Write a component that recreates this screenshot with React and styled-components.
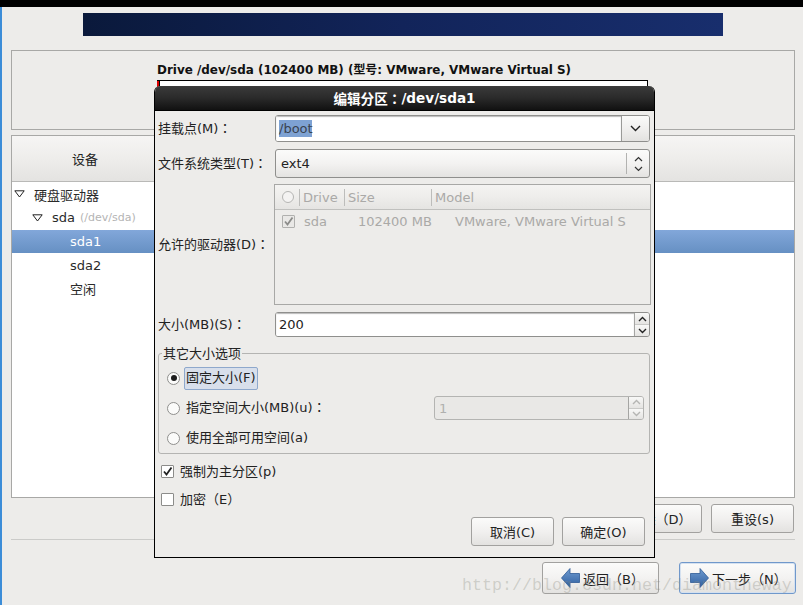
import React from "react";
import styled, { createGlobalStyle, css } from "styled-components";

const Global = createGlobalStyle`
  html, body { margin: 0; padding: 0; background: #edecea; }
  body { width: 803px; height: 605px; overflow: hidden; font-family: "DejaVu Sans", "Noto Sans CJK SC", sans-serif; font-size: 13px; color: #222; }
  * { box-sizing: border-box; }
`;

const Screen = styled.div`
  position: relative; width: 803px; height: 605px; display: flex; flex-direction: column; overflow: hidden; background: #edecea;
`;
const TopBar = styled.div`height: 7px; background: #000; flex: none;`;
const Desk = styled.div`flex: 1; display: flex; min-height: 0;`;
const Strip = styled.div`width: 2px; background: #3c8dd8; flex: none;`;
const Main = styled.div`flex: 1; display: flex; flex-direction: column; padding: 6px 8px 0 9px; min-width: 0;`;
const Banner = styled.div`
  align-self: center; width: 640px; height: 23px; flex: none;
  background: linear-gradient(90deg, #0a193b 0%, #12245a 50%, #182e6d 100%);
`;
const DrivePanel = styled.section`
  margin-top: 14px; height: 80px; flex: none; border: 1px solid #a8a8a6;
  display: flex; flex-direction: column; align-items: center; padding-top: 11px;
`;
const DriveTitle = styled.div`
  width: 491px; margin-right: 1px; font-size: 11.95px; font-weight: 700; color: #111; line-height: 16px; white-space: nowrap;
`;
const DriveBar = styled.div`
  width: 491px; height: 42px; margin-top: 2px; margin-right: 1px; border: 1px solid #000; background: #fff; border-left: 0; display: flex;
`;
const DriveSeg = styled.div`width: 3px; background: #e00000; border-right: 1px solid #000;`;
const DevicePanel = styled.section`
  margin-top: 5px; height: 363px; flex: none; border: 1px solid #a8a8a6; background: #fff; display: flex; flex-direction: column;
`;
const DeviceHead = styled.div`
  height: 46px; flex: none; background: linear-gradient(180deg, #f6f5f4 0%, #eeedeb 50%, #e4e3e1 100%);
  border-bottom: 1px solid #b9b9b7; display: flex; align-items: center;
`;
const HeadCell = styled.div`width: 146px; text-align: center; color: #222;`;
const Tree = styled.div`padding-top: 0.5px; display: flex; flex-direction: column;`;
const TreeRow = styled.div`
  height: 23.6px; flex: none; display: flex; align-items: center; padding-left: ${p => p.$indent}px;
  color: ${p => (p.$selected ? "#fff" : "#2a2a2a")};
  ${p => p.$selected && css`background: linear-gradient(180deg, #82a7da 0%, #6690c3 100%);`}
`;
const TreeIcon = styled.svg`width: 11px; height: 8px; margin-right: ${p => p.$gap}px; flex: none;`;
const TreeHint = styled.span`margin-left: 5px; font-size: 11px; color: #b4b4b4;`;
const ActionRow = styled.div`margin-top: 6px; display: flex; justify-content: flex-end; gap: 9px; padding-right: 1px; flex: none;`;
const Button = styled.div`
  width: ${p => p.$w || 83}px; height: 29px; border: 1px solid #a2a19f; border-radius: 3px;
  background: linear-gradient(180deg, #fbfbfa 0%, #f1f0ef 50%, #e3e2e0 100%);
  display: flex; align-items: center; justify-content: center; color: #222; white-space: nowrap;
`;
const Separator = styled.div`margin-top: 6px; height: 1px; background: #cbcbc9; flex: none;`;
const NavRow = styled.div`margin-top: 22px; margin-right: -1px; display: flex; justify-content: flex-end; gap: 20px; flex: none;`;
const NavButton = styled.div`
  width: 117px; height: 32px; border-radius: 3px; border: 1px solid ${p => (p.$primary ? "#7098cb" : "#a2a19f")};
  background: linear-gradient(180deg, #fbfbfa 0%, #f3f2f1 50%, #e3e2e0 100%);
  display: flex; align-items: center; justify-content: flex-start; gap: 3px; padding-left: ${p => (p.$primary ? 10 : 18)}px;
  color: #222; white-space: nowrap;
  ${p => p.$primary && css`box-shadow: inset 0 0 0 1px #d5e1f0;`}
`;
const Watermark = styled.div`
  position: absolute; left: 462px; top: 576px; font-family: "Liberation Mono", "DejaVu Sans Mono", monospace; font-size: 16.67px;
  line-height: 20px; color: rgba(140, 140, 130, 0.32); white-space: nowrap; pointer-events: none;
`;

const Dialog = styled.div`
  position: absolute; left: 154px; top: 86px; width: 501px; height: 472px; background: #edecea;
  border: 1px solid #000; border-top: 0; border-radius: 6px 6px 0 0; display: flex; flex-direction: column; overflow: hidden;
`;
const DialogHead = styled.div`
  height: 25px; flex: none; background: linear-gradient(180deg, #3b3b3b 0%, #2a2a2a 50%, #111 100%); border-bottom: 1px solid #000;
  color: #fff; font-weight: 700; font-size: 13.6px; display: flex; align-items: center; justify-content: center; margin: 0 -1px;
`;
const DialogBody = styled.div`flex: 1; display: flex; flex-direction: column; padding: 4px 4px 0 3px; min-height: 0;`;
const FieldRow = styled.div`
  display: grid; grid-template-columns: 117px 1fr; align-items: center; margin-top: ${p => p.$top || 0}px; flex: none;
`;
const Label = styled.div`white-space: nowrap; color: #222; padding-bottom: 3px;`;
const Colon = styled.span`font-family: "Noto Sans CJK TC", sans-serif;`;
const fieldBox = css`
  height: ${p => p.$h}px; border: 1px solid #8f8f8d; border-radius: 3px; display: flex; overflow: hidden;
`;
const Combo = styled.div`${fieldBox} background: #fff;`;
const ComboInput = styled.div`
  flex: 1; display: flex; align-items: center; padding-left: 3px; background: #fff; box-shadow: inset 0 1px 1px #bbb;
  border-right: 1px solid #9a9a98; color: #222;
`;
const Selected = styled.span`background: #7ea2d3; color: #3a4250; line-height: 17px; width: 33px; display: inline-block;`;
const ComboButton = styled.div`
  width: 27px; flex: none; display: flex; align-items: center; justify-content: center;
  background: linear-gradient(180deg, #fafaf9 0%, #f0efee 50%, #e3e2e0 100%);
`;
const Select = styled.div`
  ${fieldBox} background: linear-gradient(180deg, #fbfbfa 0%, #f3f2f1 50%, #e4e3e1 100%); align-items: center; padding-left: 5px;
`;
const SelectText = styled.div`flex: 1; color: #222;`;
const SelectSep = styled.div`width: 1px; height: 21px; background: #b2b2b0;`;
const SelectArrows = styled.div`width: 22px; display: flex; align-items: center; justify-content: center;`;
const Table = styled.div`
  height: 121px; margin: 0 -1px; border: 1px solid #a8a8a6; display: flex; flex-direction: column; background: #edecea;
`;
const TableHead = styled.div`
  height: 25px; flex: none; display: grid; grid-template-columns: 25px 45px 87px 1fr; align-items: center; color: #aaa9a7;
  background: linear-gradient(180deg, #f4f3f2 0%, #eeedeb 50%, #e5e4e2 100%); border-bottom: 1px solid #c0c0be;
`;
const HeadCol = styled.div`
  height: 17px; line-height: 17px; display: flex; align-items: center; padding-left: 3px;
  ${p => p.$sep && css`border-right: 1px solid #bdbdbb;`}
`;
const Ring = styled.span`width: 12px; height: 12px; margin-left: 4px; border-radius: 50%; border: 1px solid #b5b5b3; background: #f4f3f2;`;
const TableRow = styled.div`
  display: grid; grid-template-columns: 29px 54px 97px 1fr; align-items: center; height: 23px; color: #aaa9a7; white-space: nowrap;
`;
const CheckBox = styled.span`
  width: 13px; height: 13px; flex: none; border: 1px solid ${p => (p.$off ? "#b0b0ae" : "#8c8c8a")}; border-radius: 1px;
  background: ${p => (p.$off ? "#e9e8e6" : "#fff")}; display: flex; align-items: center; justify-content: center;
  margin-left: ${p => p.$left || 0}px;
`;
const SpinButtons = styled.div`
  width: 15px; flex: none; display: flex; flex-direction: column; border-left: 1px solid #a5a5a3;
`;
const SpinPart = styled.div`
  flex: 1; display: flex; align-items: center; justify-content: center;
  background: linear-gradient(180deg, #f8f8f7, #e5e4e2);
  & + & { border-top: 1px solid ${p => (p.$off ? "#c9c9c7" : "#aaa")}; }
`;
const SizeInput = styled.div`${fieldBox}`;
const SizeValue = styled.div`flex: 1; background: #fff; display: flex; align-items: center; padding-left: 3px; box-shadow: inset 0 1px 1px #bbb;`;
const GroupBox = styled.div`
  position: relative; margin-top: 16px; height: 101px; flex: none; border: 1px solid #b4b4b2; border-radius: 3px;
  padding: 9px 5px 0 8px; display: flex; flex-direction: column;
`;
const Legend = styled.div`
  position: absolute; left: 3px; top: -9px; padding: 0 1px; background: #edecea; color: #222; line-height: 17px;
`;
const OptionRow = styled.div`height: 30px; flex: none; display: flex; align-items: center;`;
const Radio = styled.span`
  width: 13px; height: 13px; flex: none; border-radius: 50%; border: 1px solid #8f8f8d;
  background: #fbfbfa; display: flex; align-items: center; justify-content: center;
  &::after { content: ""; width: 6px; height: 6px; border-radius: 50%; background: ${p => (p.$on ? "#1c1c1c" : "transparent")}; }
`;
const OptionLabel = styled.span`
  margin-left: 4px; padding: 1px 1px 3px; line-height: 17px; color: #222; border: 1px solid transparent; border-radius: 2px; white-space: nowrap;
  ${p => p.$focus && css`background: #d8dfeb; border-color: #8ea8cc;`}
`;
const DisabledSpin = styled.div`
  margin-left: auto; width: 210px; height: 24px; border: 1px solid #b4b4b2; border-radius: 3px; display: flex; overflow: hidden; background: #e9e8e6;
`;
const DisabledValue = styled.div`flex: 1; padding-left: 4px; display: flex; align-items: center; color: #b0b0ae;`;
const CheckRow = styled.div`
  height: 28px; flex: none; display: flex; align-items: center; gap: 6px; padding-left: 3px; color: #222;
  margin-top: ${p => p.$top || 0}px;
`;
const CheckText = styled.span`padding-bottom: 2px;`;
const DialogActions = styled.div`margin-top: 4px; padding-right: 5px; display: flex; justify-content: flex-end; gap: 8px; flex: none;`;

const Tick = ({ color = "#222" }) => (
  <svg width="11" height="11" viewBox="0 0 11 11"><path d="M2 5.5 L4.5 8.5 L9.5 1.5" fill="none" stroke={color} strokeWidth="1.8" /></svg>
);
const Triangle = ({ gap }) => (
  <TreeIcon $gap={gap} viewBox="0 0 11 8"><path d="M0.8 0.8 H10.2 L5.5 7 Z" fill="#fff" stroke="#222" strokeWidth="1" /></TreeIcon>
);
const Chevron = () => (
  <svg width="11" height="7" viewBox="0 0 11 7"><path d="M1 1 L5.5 5.5 L10 1" fill="none" stroke="#222" strokeWidth="1.4" /></svg>
);
const UpDown = () => (
  <svg width="9" height="16" viewBox="0 0 9 16"><path d="M1 5 L4.5 1.5 L8 5 M1 11 L4.5 14.5 L8 11" fill="none" stroke="#333" strokeWidth="1.2" /></svg>
);
const Spin = ({ up, color = "#222" }) => (
  <svg width="9" height="6" viewBox="0 0 9 6"><path d={up ? "M1 5 L4.5 1.5 L8 5" : "M1 1 L4.5 4.5 L8 1"} fill="none" stroke={color} strokeWidth="1.4" /></svg>
);
const NavArrow = ({ right }) => (
  <svg width="19" height="20" viewBox="0 0 19 20" style={{ flex: "none" }}>
    <defs>
      <linearGradient id="navArrowFill" x1="0" y1="0" x2="0" y2="1">
        <stop offset="0" stopColor="#6f9bd0" />
        <stop offset="1" stopColor="#2f5f9f" />
      </linearGradient>
    </defs>
    <path
      d={right ? "M0.5 5.5 H10 V0.5 L18.5 10 L10 19.5 V14.5 H0.5 Z" : "M18.5 5.5 H9 V0.5 L0.5 10 L9 19.5 V14.5 H18.5 Z"}
      fill="url(#navArrowFill)" stroke="#2e5a96" strokeWidth="0.8"
    />
  </svg>
);

export default function App() {
  return (
    <Screen>
      <Global />
      <TopBar />
      <Desk>
        <Strip />
        <Main>
          <Banner />
          <DrivePanel>
            <DriveTitle>Drive /dev/sda (102400 MB) (型号: VMware, VMware Virtual S)</DriveTitle>
            <DriveBar><DriveSeg /></DriveBar>
          </DrivePanel>
          <DevicePanel>
            <DeviceHead><HeadCell>设备</HeadCell></DeviceHead>
            <Tree>
              <TreeRow $indent={2}><Triangle gap={9} />硬盘驱动器</TreeRow>
              <TreeRow $indent={20}><Triangle gap={9} />sda<TreeHint>(/dev/sda)</TreeHint></TreeRow>
              <TreeRow $indent={58} $selected>sda1</TreeRow>
              <TreeRow $indent={58}>sda2</TreeRow>
              <TreeRow $indent={58}>空闲</TreeRow>
            </Tree>
          </DevicePanel>
          <ActionRow>
            <Button>删除（D）</Button>
            <Button>重设(s)</Button>
          </ActionRow>
          <Separator />
          <NavRow>
            <NavButton><NavArrow />返回（B）</NavButton>
            <NavButton $primary><NavArrow right />下一步（N）</NavButton>
          </NavRow>
        </Main>
      </Desk>

      <Dialog>
        <DialogHead>编辑分区<Colon>：</Colon>/dev/sda1</DialogHead>
        <DialogBody>
          <FieldRow>
            <Label>挂载点(M)<Colon>：</Colon></Label>
            <Combo $h={27}>
              <ComboInput><Selected>/boot</Selected></ComboInput>
              <ComboButton><Chevron /></ComboButton>
            </Combo>
          </FieldRow>
          <FieldRow $top={7}>
            <Label>文件系统类型(T)<Colon>：</Colon></Label>
            <Select $h={29}>
              <SelectText>ext4</SelectText>
              <SelectSep />
              <SelectArrows><UpDown /></SelectArrows>
            </Select>
          </FieldRow>
          <FieldRow $top={6}>
            <Label>允许的驱动器(D)<Colon>：</Colon></Label>
            <Table>
              <TableHead>
                <HeadCol $sep><Ring /></HeadCol>
                <HeadCol $sep>Drive</HeadCol>
                <HeadCol $sep>Size</HeadCol>
                <HeadCol>Model</HeadCol>
              </TableHead>
              <TableRow>
                <CheckBox $off $left={7}><Tick color="#8c8c8a" /></CheckBox>
                <span>sda</span>
                <span>102400 MB</span>
                <span>VMware, VMware Virtual S</span>
              </TableRow>
            </Table>
          </FieldRow>
          <FieldRow $top={7}>
            <Label>大小(MB)(S)<Colon>：</Colon></Label>
            <SizeInput $h={25}>
              <SizeValue>200</SizeValue>
              <SpinButtons>
                <SpinPart><Spin up /></SpinPart>
                <SpinPart><Spin /></SpinPart>
              </SpinButtons>
            </SizeInput>
          </FieldRow>
          <GroupBox>
            <Legend>其它大小选项</Legend>
            <OptionRow><Radio $on /><OptionLabel $focus>固定大小(F)</OptionLabel></OptionRow>
            <OptionRow>
              <Radio /><OptionLabel>指定空间大小(MB)(u)<Colon>：</Colon></OptionLabel>
              <DisabledSpin>
                <DisabledValue>1</DisabledValue>
                <SpinButtons>
                  <SpinPart $off><Spin up color="#b5b5b3" /></SpinPart>
                  <SpinPart $off><Spin color="#b5b5b3" /></SpinPart>
                </SpinButtons>
              </DisabledSpin>
            </OptionRow>
            <OptionRow><Radio /><OptionLabel>使用全部可用空间(a)</OptionLabel></OptionRow>
          </GroupBox>
          <CheckRow $top={3}><CheckBox><Tick /></CheckBox><CheckText>强制为主分区(p)</CheckText></CheckRow>
          <CheckRow><CheckBox /><CheckText>加密（E）</CheckText></CheckRow>
          <DialogActions>
            <Button>取消(C)</Button>
            <Button>确定(O)</Button>
          </DialogActions>
        </DialogBody>
      </Dialog>

      <Watermark>http://blog.csdn.net/diamontheway</Watermark>
    </Screen>
  );
}
